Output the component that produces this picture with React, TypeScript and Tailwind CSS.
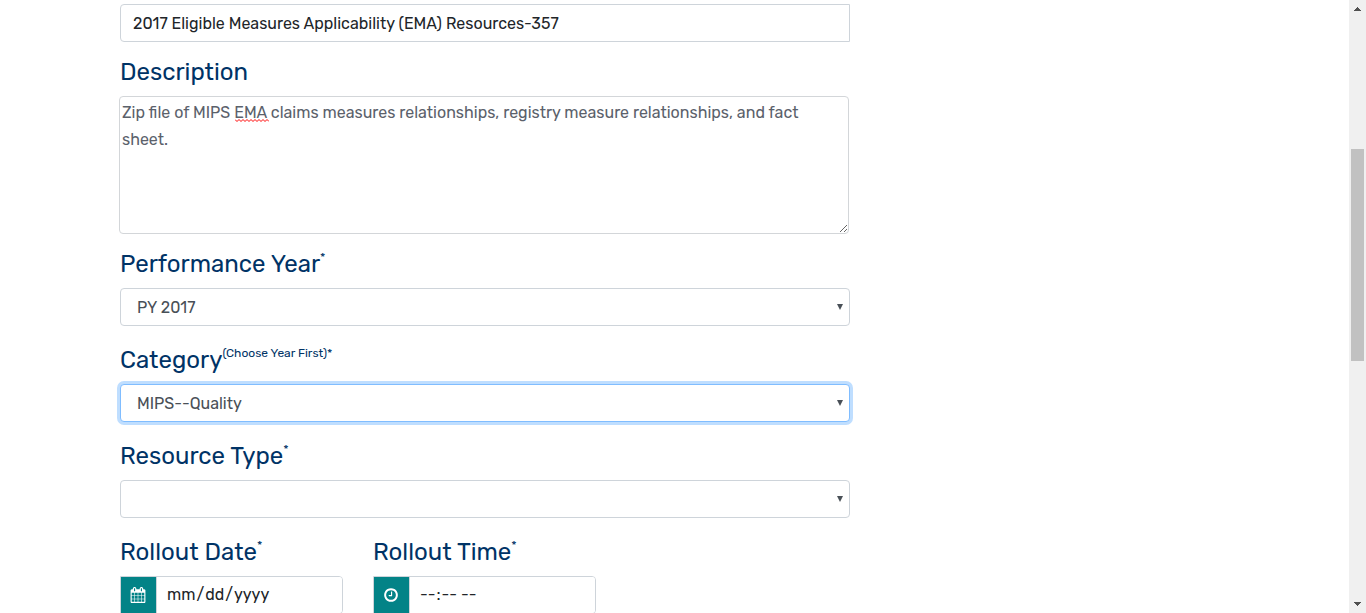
import { useState } from "react";
import type { ReactNode } from "react";

const CALENDAR_PATH =
  "M192 1664h288v-288h-288v288zm352 0h320v-288h-320v288zm-352-352h288v-320h-288v320zm352 0h320v-320h-320v320zm-352-384h288v-288h-288v288zm736 736h320v-288h-320v288zm-384-736h320v-288h-320v288zm768 736h288v-288h-288v288zm-384-352h320v-320h-320v320zm-352-864v-288q0-13-9.5-22.5t-22.5-9.5h-64q-13 0-22.5 9.5t-9.5 22.5v288q0 13 9.5 22.5t22.5 9.5h64q13 0 22.5-9.5t9.5-22.5zm736 864h288v-320h-288v320zm-384-384h320v-288h-320v288zm384 0h288v-288h-288v288zm32-480v-288q0-13-9.5-22.5t-22.5-9.5h-64q-13 0-22.5 9.5t-9.5 22.5v288q0 13 9.5 22.5t22.5 9.5h64q13 0 22.5-9.5t9.5-22.5zm384-64v1280q0 52-38 90t-90 38h-1408q-52 0-90-38t-38-90v-1280q0-52 38-90t90-38h128v-96q0-66 47-113t113-47h64q66 0 113 47t47 113v96h384v-96q0-66 47-113t113-47h64q66 0 113 47t47 113v96h128q52 0 90 38t38 90z";
const CLOCK_PATH =
  "M1024 544v448q0 14-9 23t-23 9h-320q-14 0-23-9t-9-23v-64q0-14 9-23t23-9h224v-352q0-14 9-23t23-9h64q14 0 23 9t9 23zm416 352q0-148-73-273t-198-198-273-73-273 73-198 198-73 273 73 273 198 198 273 73 273-73 198-198 73-273zm224 0q0 209-103 385.5t-279.5 279.5-385.5 103-385.5-103-279.5-279.5-103-385.5 103-385.5 279.5-279.5 385.5-103 385.5 103 279.5 279.5 103 385.5z";

function FieldLabel({ id, text, note }: { id: string; text: string; note?: string }) {
  return (
    <label htmlFor={id} className="mb-[10px] flex h-7 items-start text-[24px] leading-7 text-[#003366]">
      {text}
      {note && <span className="text-[12px] leading-[14px]">{note}</span>}
    </label>
  );
}

function SelectField({
  id,
  text,
  note,
  options,
  initial,
  focused = false,
}: {
  id: string;
  text: string;
  note: string;
  options: string[];
  initial: string;
  focused?: boolean;
}) {
  const [value, setValue] = useState(initial);
  return (
    <div>
      <FieldLabel id={id} text={text} note={note} />
      <div className="relative">
        <select
          id={id}
          value={value}
          onChange={(e) => setValue(e.target.value)}
          className={
            "block h-[38px] w-full appearance-none rounded border bg-white px-4 pt-[2px] text-[16px] text-[#495057] outline-none " +
            (focused ? "border-[#80bdff] ring-3 ring-[#bfdeff]" : "border-[#ced4da]")
          }
        >
          {options.map((o) => (
            <option key={o} value={o}>
              {o}
            </option>
          ))}
        </select>
        <svg viewBox="0 0 6 6" className="pointer-events-none absolute top-4 right-[7px] size-[6px] fill-[#495057]" aria-hidden="true">
          <path d="M0 0h6L3 6z" />
        </svg>
      </div>
    </div>
  );
}

function AddonField({ id, text, type, icon }: { id: string; text: string; type: "date" | "time"; icon: ReactNode }) {
  return (
    <div className="w-[223px]">
      <FieldLabel id={id} text={text} note="*" />
      <div className="flex h-[38px] overflow-hidden rounded-r border border-[#ced4da]">
        <span className="flex w-9 shrink-0 items-center justify-center border-r border-[#ced4da] bg-[#038387] pr-px text-white">
          {icon}
        </span>
        <input
          id={id}
          type={type}
          className="min-w-0 flex-1 bg-white px-[9px] text-[16px] text-[#212529] outline-none [&::-webkit-calendar-picker-indicator]:hidden"
        />
      </div>
    </div>
  );
}

function ScrollTrack() {
  return (
    <div className="flex w-[17px] shrink-0 flex-col items-center bg-[#f0f0f0]" aria-hidden="true">
      <svg viewBox="0 0 7 4" className="mt-[7px] h-1 w-[7px] shrink-0 fill-[#505050]" shapeRendering="crispEdges">
        <path d="M3 0h1v1h1v1h1v1h1v1H0V3h1V2h1V1h1z" />
      </svg>
      <div className="flex-[138]" />
      <div className="w-[13px] flex-[212] bg-[#c1c1c1]" />
      <div className="flex-[241]" />
      <svg viewBox="0 0 7 4" className="mb-[7px] h-1 w-[7px] shrink-0 fill-[#505050]" shapeRendering="crispEdges">
        <path d="M0 0h7v1H6v1H5v1H4v1H3V3H2V2H1V1H0z" />
      </svg>
    </div>
  );
}

export default function App() {
  return (
    <div className="flex h-screen overflow-hidden bg-white font-['Rubik','Roboto',sans-serif]">
      <main className="min-w-0 flex-1 overflow-hidden pt-1 pl-[120px]">
        <form className="w-full max-w-[730px]">
          <input
            aria-label="Title"
            defaultValue="2017 Eligible Measures Applicability (EMA) Resources-357"
            className="block h-[38px] w-full rounded-l border border-[#ced4da] bg-white px-3 text-[16px] text-[#212529] outline-none"
          />
          <div className="mt-4">
            <FieldLabel id="description" text="Description" />
            <div className="relative -ml-px pr-px">
              <textarea
                id="description"
                spellCheck={false}
                defaultValue="Zip file of MIPS EMA claims measures relationships, registry measure relationships, and fact sheet."
                className="block h-[138px] w-full resize rounded border border-[#d3d6d9] bg-white p-[2px] text-[16px] leading-[27px] text-[#5b616b] outline-none"
              />
              <svg viewBox="0 0 34 3" className="pointer-events-none absolute top-[23px] left-[116px] h-[3px] w-[34px]" aria-hidden="true">
                <path
                  d="M0 .5l2 2 2-2 2 2 2-2 2 2 2-2 2 2 2-2 2 2 2-2 2 2 2-2 2 2 2-2 2 2 2-2 2 2"
                  fill="none"
                  stroke="#ff0000"
                />
              </svg>
            </div>
          </div>
          <div className="mt-4 flex flex-col gap-5">
            <SelectField id="year" text="Performance Year" note="*" options={["PY 2017", "PY 2018"]} initial="PY 2017" />
            <SelectField
              id="category"
              text="Category"
              note="(Choose Year First)*"
              options={["MIPS--Quality", "MIPS--Cost"]}
              initial="MIPS--Quality"
              focused
            />
            <SelectField id="type" text="Resource Type" note="*" options={["", "Fact Sheet"]} initial="" />
            <div className="flex gap-[30px]">
              <AddonField
                id="date"
                text="Rollout Date"
                type="date"
                icon={
                  <svg viewBox="0 0 1792 1792" className="size-4 fill-current" aria-hidden="true">
                    <path d={CALENDAR_PATH} />
                  </svg>
                }
              />
              <AddonField
                id="time"
                text="Rollout Time"
                type="time"
                icon={
                  <svg viewBox="0 0 1792 1792" className="size-4 fill-current" aria-hidden="true">
                    <path d={CLOCK_PATH} />
                  </svg>
                }
              />
            </div>
          </div>
        </form>
      </main>
      <ScrollTrack />
    </div>
  );
}
